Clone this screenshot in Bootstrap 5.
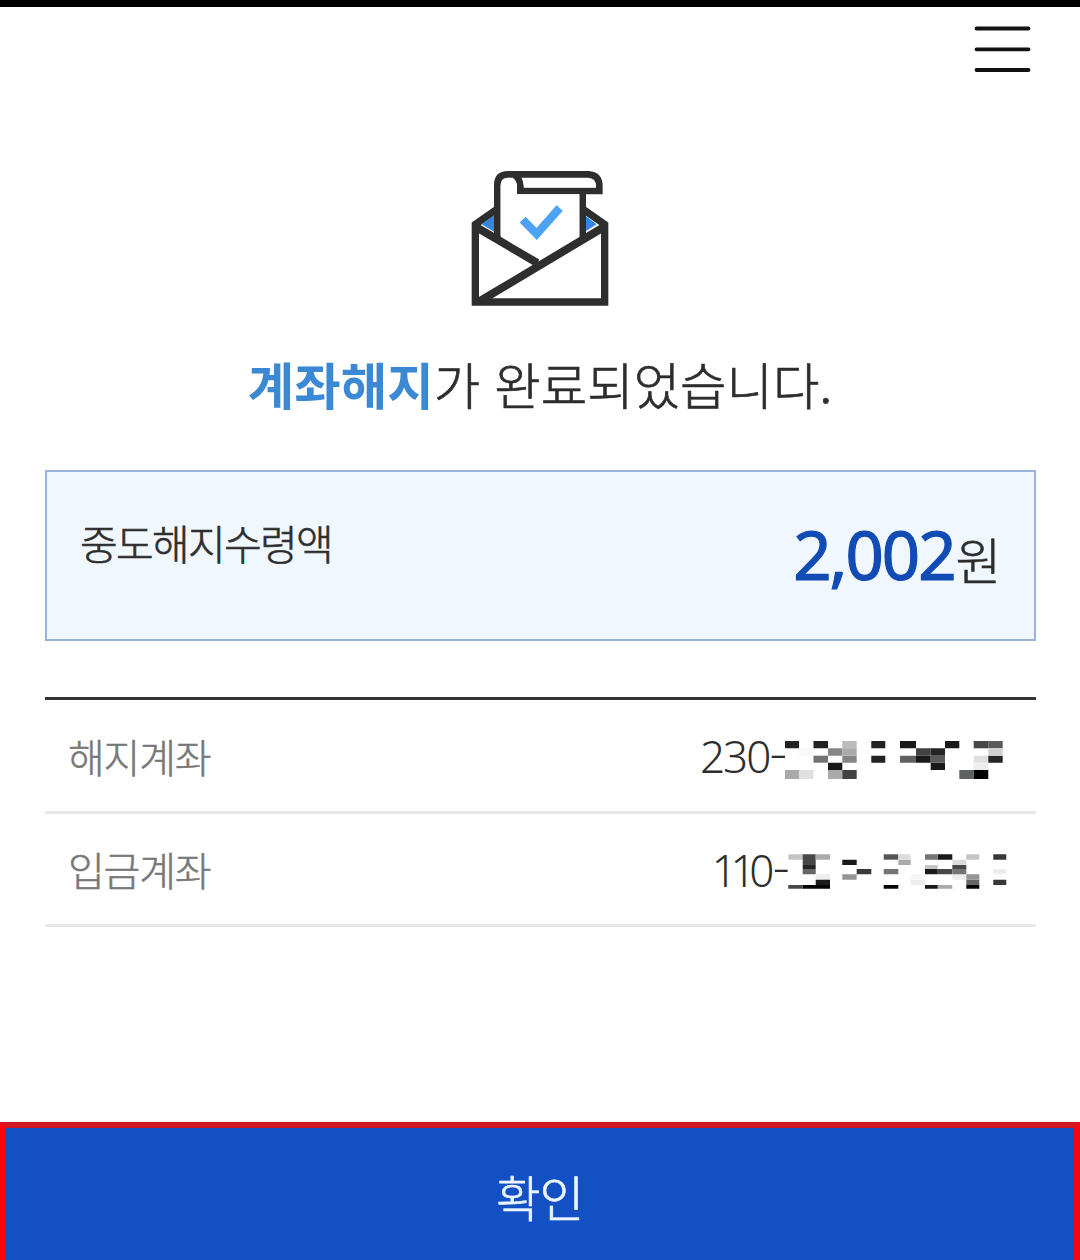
<!DOCTYPE html>
<html lang="ko">
<head>
<meta charset="utf-8">
<meta name="viewport" content="width=device-width, initial-scale=1">
<title>계좌해지 완료</title>
<link rel="stylesheet" href="https://cdn.jsdelivr.net/npm/bootstrap@5.3.0/dist/css/bootstrap.min.css">
<style>
  body { font-family: "Noto Sans CJK KR", sans-serif; color: #2d2d2d; background: #fff; }
  .screen { height: 1260px; overflow: hidden; border-top: 7px solid #000; }
  .topbar { height: 143px; padding: 15px 46px 0 0; }
  .menu-icon { width: 64px; height: 56px; }
  .mail-icon { width: 180px; height: 170px; }
  .headline { height: 150px; padding-top: 28px; font-size: 50.5px; line-height: 70px; font-weight: 300; white-space: nowrap; margin: 0; -webkit-text-stroke: .7px currentColor; }
  .headline strong { color: #3b88d5; font-weight: 700; -webkit-text-stroke: 0; }
  .content { padding: 0 44.5px; }
  .amount-box { height: 171px; border: 2px solid #9ab3da; background: #f1f7fe; padding: 0 34px 0 33.5px; }
  .amount-label { font-size: 41px; line-height: 60px; letter-spacing: -1.7px; padding-top: 40px; font-weight: 300; -webkit-text-stroke: .6px currentColor; }
  .amount-line { padding-top: 32px; line-height: 100px; white-space: nowrap; }
  .amount-num { font-family: "Noto Sans", sans-serif; font-size: 67px; font-weight: 400; letter-spacing: -2px; color: #114cb5; -webkit-text-stroke: 1.2px currentColor; }
  .amount-unit { font-size: 50px; font-weight: 300; margin: 0 -2px 0 1px; -webkit-text-stroke: .6px currentColor; }
  .details { margin-top: 56px; border-top: 3px solid #333; }
  .detail-row { height: 113.5px; border-bottom: 3px solid #e7e7e7; padding: 0 29px 0 23.5px; }
  .detail-label { font-size: 40px; letter-spacing: -1.2px; color: #777; font-weight: 300; line-height: 60px; -webkit-text-stroke: .5px currentColor; padding-top: 1px; }
  .acct { font-family: "Noto Sans", sans-serif; font-size: 44px; letter-spacing: -2px; font-weight: 300; line-height: 60px; padding-top: 2px; }
  .acct-narrow { letter-spacing: -6.4px; }
  .acct-last { letter-spacing: -2px; }
  .dash { display: inline-block; transform: translate(2px, -4px) scaleX(1.25); }
  .dash-short { letter-spacing: -2px; margin-left: -3px; transform: translate(5px, -4px) scaleX(1.2); }
  .mosaic { width: 225px; height: 60px; margin-top: 9px; }
  .confirm { height: 138px; border: 6px solid #f8050f; border-top-color: #d01822; border-bottom: 0; background: #1250c4; color: #eaf5ff; font-size: 48.5px; font-weight: 300; line-height: 136px; letter-spacing: -1px; padding: 0 1px 2px 0; -webkit-text-stroke: .7px currentColor; }
</style>
</head>
<body>
<main class="screen d-flex flex-column">
  <header class="topbar d-flex justify-content-end flex-shrink-0">
    <svg class="menu-icon" viewBox="0 0 64 56" aria-label="메뉴"><path d="M6.5 6.5h52M6.5 27.3h52M6.5 48h52" stroke="#111" stroke-width="3.8" stroke-linecap="round"/></svg>
  </header>
  <div class="text-center flex-shrink-0">
    <svg class="mail-icon d-block mx-auto" viewBox="0 0 540 510" fill="none">
      <path d="M142 177L76 223V456H464V223L398 177" stroke="#2e2e2e" stroke-width="22"/>
      <path d="M142 262V105Q142 73 174 73H415Q448 75 448 108V123H211V108Q209 86 195 76M398 130V260" stroke="#2e2e2e" stroke-width="20"/>
      <path d="M152 256V105Q156 84 177 83Q199 86 201 105V133H388V256L268 327z" fill="#fff"/>
      <path d="M216 84H410Q434 90 438 112H223Q224 94 216 84z" fill="#fff"/>
      <path d="M78 231L262 339M462 231L90 453" stroke="#2e2e2e" stroke-width="24"/>
      <path d="M95 223l37-27v49zM440 223l-32-24v44z" fill="#3186de"/>
      <path d="M218 209L260 252L329 174" stroke="#4ba2f6" stroke-width="25"/>
    </svg>
    <h1 class="headline"><strong>계좌해지</strong>가 완료되었습니다.</h1>
  </div>
  <section class="content flex-shrink-0">
    <div class="amount-box d-flex justify-content-between">
      <div class="amount-label">중도해지수령액</div>
      <div class="amount-line"><span class="amount-num">2,002</span><span class="amount-unit">원</span></div>
    </div>
    <div class="details">
      <div class="detail-row d-flex justify-content-between align-items-center">
        <span class="detail-label">해지계좌</span>
        <span class="d-flex align-items-center"><span class="acct">230<span class="dash">-</span></span>
          <svg class="mosaic" viewBox="782 730 225 60">
            <path fill="#222" d="M785 741h14v7.3h-14zM813.5 741H828v7.3h-14.5zM871.3 741h14v7.3h-14zM871.3 755.7h14v7h-14z"/>
            <path fill="#bbb" d="M842.3 741h14.4v7.3h-14.4z"/>
            <path fill="#f8f8f8" d="M799 748.3h14.4v7.4H799z"/>
            <path fill="#858585" d="M828 748.3h14.3v7.4H828zM842.3 755.7h14.4v7h-14.4z"/>
            <path fill="#aaa" d="M842.3 748.3h14.4v7.4h-14.4zM785 770h14v9h-14zM828 770h14.3v9H828z"/>
            <path fill="#737373" d="M813.5 755.7H828v7h-14.5z"/>
            <path fill="#191919" d="M828 762.7h14.3v7.3H828zM900 741h16v7.3h-16zM916 755.7h14.7v7H916zM945 741h14.3v7.3H945zM930.7 762.7H945v7.3h-14.3z"/>
            <path fill="#e0e0e0" d="M799 770h14.4v9H799zM973.7 755.7h14.6v7h-14.6z"/>
            <path fill="#424242" d="M842.3 770h14.4v9h-14.4zM916 748.3h14.7v7.4H916z"/>
            <path fill="#606262" d="M900 755.7h16v7h-16zM959.3 770h14.4v9h-14.4z"/>
            <path fill="#252525" d="M930.7 748.3H945v7.4h-14.3zM988.3 755.7h14.4v7h-14.4z"/>
            <path fill="#5a5a5a" d="M930.7 755.7H945v7h-14.3zM988.3 741h14.4v7.3h-14.4z"/>
            <path fill="#484848" d="M973.7 741h14.6v7.3h-14.6z"/>
            <path fill="#d0d0d0" d="M988.3 748.3h14.4v7.4h-14.4z"/>
            <path fill="#eee" d="M973.7 762.7h14.6v7.3h-14.6z"/>
            <path fill="#000" d="M973.7 770h14.6v9h-14.6z"/>
          </svg></span>
      </div>
      <div class="detail-row d-flex justify-content-between align-items-center">
        <span class="detail-label">입금계좌</span>
        <span class="d-flex align-items-center"><span class="acct acct-narrow">11<span class="acct-last">0</span><span class="dash dash-short">-</span></span>
          <svg class="mosaic" viewBox="782 843 225 60">
            <path fill="#c4c4c4" d="M788.3 854.3h14.4v5.4h-14.4zM966.3 854.3h13v5.4h-13zM925 865h12.7v4H925z"/>
            <path fill="#484848" d="M788.3 885h14.4v3.7h-14.4zM802.7 854.3h13V865h-13zM937.7 869h14.6v5.3h-14.6zM952.3 865h14v4h-14z"/>
            <path fill="#252525" d="M802.7 865h13v4h-13z"/>
            <path fill="#666" d="M802.7 869h13v5.3h-13zM966.3 879.7h13v5.3h-13z"/>
            <path fill="#050505" d="M802.7 885H830v3.7h-27.3zM883.7 885h14.6v3.7h-14.6zM966.3 885h13v3.7h-13z"/>
            <path fill="#aaa" d="M815.7 854.3H830v5.4h-14.3zM898.3 859.7h12.4v5.3h-12.4zM937.7 885h14.6v3.7h-14.6z"/>
            <path fill="#ededed" d="M815.7 874.3H830v5.4h-14.3zM910.7 879.7H925v5.3h-14.3zM952.3 874.3h14v5.4h-14zM993.3 869h13v5.3h-13z"/>
            <path fill="#1a1a1a" d="M815.7 879.7H830v5.3h-14.3zM842.3 859.7h14.4v5.3h-14.4zM925 869h12.7v5.3H925zM925 885h12.7v3.7H925zM937.7 854.3h14.6v5.4h-14.6z"/>
            <path fill="#959595" d="M842.3 874.3h14.4v5.4h-14.4zM966.3 874.3h13v5.4h-13z"/>
            <path fill="#383838" d="M856.7 869h14.6v5.3h-14.6zM993.3 854.3h13v5.4h-13zM993.3 879.7h13v5.3h-13z"/>
            <path fill="#555" d="M883.7 854.3h14.6v5.4h-14.6z"/>
            <path fill="#747474" d="M883.7 869h14.6v5.3h-14.6zM925 854.3h12.7v5.4H925zM952.3 869h14v5.3h-14z"/>
            <path fill="#dcdcdc" d="M898.3 854.3h12.4v5.4h-12.4zM952.3 859.7h14v5.3h-14z"/>
            <path fill="#f5f5f5" d="M910.7 874.3H925v5.4h-14.3z"/>
          </svg></span>
      </div>
    </div>
  </section>
  <button type="button" class="confirm btn rounded-0 w-100 mt-auto flex-shrink-0">확인</button>
</main>
<script src="https://cdn.jsdelivr.net/npm/bootstrap@5.3.0/dist/js/bootstrap.bundle.min.js"></script>
</body>
</html>
